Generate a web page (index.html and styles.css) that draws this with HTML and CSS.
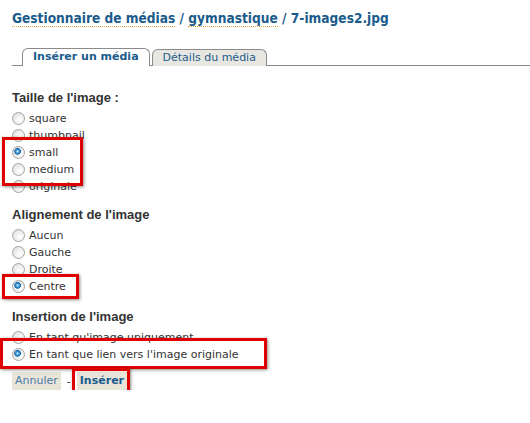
FILE: index.html
```html
<!DOCTYPE html>
<html lang="fr">
<head>
    <meta charset="UTF-8">
    <title>Gestionnaire de médias</title>
    <link rel="stylesheet" href="styles.css">
</head>
<body>
    <h1 class="title">
        <a href="#">Gestionnaire de médias</a> / <a href="#">gymnastique</a> / 7-images2.jpg
    </h1>

    <div class="tabs">
        <a href="#" class="tab active">Insérer un média</a>
        <a href="#" class="tab">Détails du média</a>
    </div>

    <form class="options">
        <h3>Taille de l'image :</h3>
        <label class="row"><input type="radio" name="size"> square</label>
        <label class="row"><input type="radio" name="size"> thumbnail</label>
        <label class="row"><input type="radio" name="size" checked> small</label>
        <label class="row"><input type="radio" name="size"> medium</label>
        <label class="row"><input type="radio" name="size"> originale</label>

        <h3 class="second">Alignement de l'image</h3>
        <label class="row"><input type="radio" name="align"> Aucun</label>
        <label class="row"><input type="radio" name="align"> Gauche</label>
        <label class="row"><input type="radio" name="align"> Droite</label>
        <label class="row"><input type="radio" name="align" checked> Centre</label>

        <h3 class="third">Insertion de l'image</h3>
        <label class="row"><input type="radio" name="link"> En tant qu'image uniquement</label>
        <label class="row"><input type="radio" name="link" checked> En tant que lien vers l'image originale</label>

        <div class="actions">
            <a href="#" class="btn">Annuler</a>
            <span class="sep">-</span>
            <a href="#" class="btn primary">Insérer</a>
        </div>
    </form>

    <!-- red annotation boxes -->
    <div class="mark mark-size"></div>
    <div class="mark mark-align"></div>
    <div class="mark mark-link"></div>
    <div class="mark mark-insert"></div>
</body>
</html>
```

FILE: styles.css
```css
body {
    margin: 0;
    padding: 0 0 0 12px;
    background: #fff;
    color: #333;
    font-family: "DejaVu Sans", Verdana, sans-serif;
    font-size: 11px;
    position: relative;
}

a {
    text-decoration: none;
}

.title {
    margin: 0;
    padding-top: 9px;
    font-family: "DejaVu Sans Condensed", "DejaVu Sans", sans-serif;
    font-size: 13.6px;
    line-height: 18px;
    font-weight: bold;
    color: #1a5b8c;
}

.title a {
    color: #1a5b8c;
    border-bottom: 1px dotted #e8a33a;
}

.tabs {
    display: flex;
    gap: 2px;
    margin-top: 21px;
    padding-left: 10px;
    height: 17px;
    border-bottom: 1px solid #8a8a8a;
}

.tab {
    display: block;
    height: 16px;
    line-height: 16px;
    margin-top: 1px;
    padding: 0 10px;
    border: 1px solid #8a8a8a;
    border-bottom: none;
    border-radius: 6px 6px 0 0;
    background: #e8e6e0;
    color: #1a5b8c;
}

.tab.active {
    height: 17px;
    margin-top: 0;
    margin-bottom: -1px;
    background: #fff;
    font-weight: bold;
}

.options {
    margin: 0;
}

.options h3 {
    margin: 24px 0 4px;
    font-family: "Liberation Sans", Arial, sans-serif;
    font-size: 13px;
    line-height: 16px;
    color: #333;
}

.options h3.second {
    margin-top: 12px;
}

.options h3.third {
    margin-top: 14px;
}

.row {
    display: flex;
    align-items: center;
    height: 17px;
    gap: 4px;
}

.row input {
    appearance: none;
    margin: 0;
    width: 13px;
    height: 13px;
    border: 1px solid #a4a4a4;
    border-radius: 50%;
    background: radial-gradient(circle at 65% 65%, #ffffff 0%, #f2f2f2 40%, #d6d6d6 100%);
    box-sizing: border-box;
}

.row input:checked {
    background:
        radial-gradient(circle at 42% 40%, #dff2ff 0, #4aa3e0 1.5px, #1464a8 3px, transparent 3.6px),
        radial-gradient(circle at 65% 65%, #ffffff 0%, #f2f2f2 40%, #d6d6d6 100%);
}

.actions {
    display: flex;
    align-items: center;
    gap: 6px;
    margin-top: 9px;
    height: 18px;
}

.btn {
    display: block;
    padding: 0 3px;
    line-height: 18px;
    background: #e8e5d8;
    color: #4a7aa8;
}

.btn.primary {
    font-weight: bold;
    color: #1a5b8c;
}

.sep {
    color: #333;
}

.mark {
    position: absolute;
    border: 3px solid #e00000;
    box-shadow: 1px 1px 3px rgba(0, 0, 0, 0.45);
    box-sizing: border-box;
}

.mark-size {
    left: 2px;
    top: 137px;
    width: 81px;
    height: 49px;
}

.mark-align {
    left: 2px;
    top: 274px;
    width: 77px;
    height: 25px;
}

.mark-link {
    left: 0;
    top: 338px;
    width: 267px;
    height: 31px;
}

.mark-insert {
    left: 72px;
    top: 368px;
    width: 58px;
    height: 27px;
}
```
